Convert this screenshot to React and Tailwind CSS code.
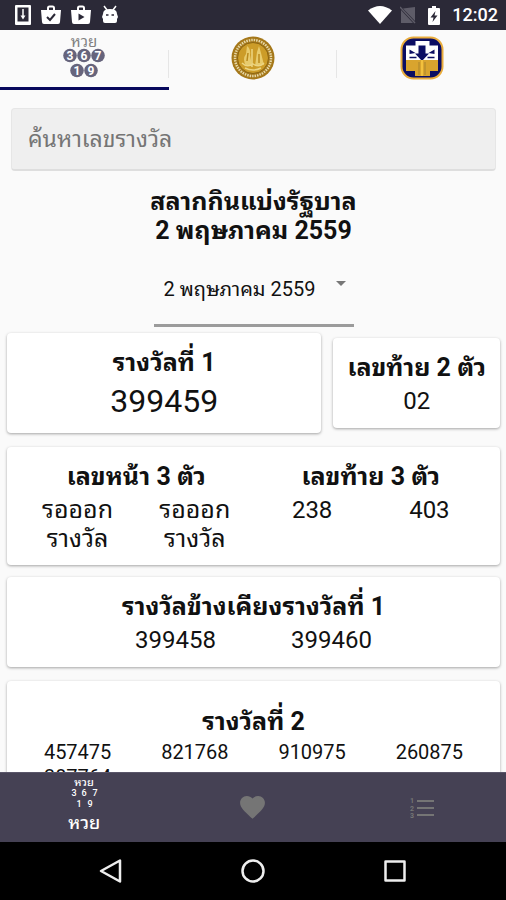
import React, { useState } from "react";

const frontThree = ["รอออกรางวัล", "รอออกรางวัล"];
const lastThree = ["238", "403"];
const nearFirst = ["399458", "399460"];
const secondPrize = ["457475", "821768", "910975", "260875", "387764"];

const StatusBar = () => (
  <header className="flex h-[30px] shrink-0 items-center justify-between bg-[#2b2937] pr-2 pl-[15px] text-white">
    <div className="flex items-center gap-2.5">
      <svg viewBox="0 0 16 20" className="h-5 w-4" aria-hidden="true">
        <rect x="0" y="0" width="16" height="20" rx="1" fill="#fff" />
        <rect x="2.500" y="2.500" width="11" height="14" fill="#2b2937" />
        <path d="M8 4v7" stroke="#fff" strokeWidth="1.500" />
        <path d="M5.500 10.500h5l-2.500 4z" fill="#fff" />
      </svg>
      <svg viewBox="0 0 20 20" className="size-5" aria-hidden="true">
        <path d="M7 5V3q0-1.500 1.500-1.500h3Q13 1.500 13 3v2" fill="none" stroke="#fff" strokeWidth="2" />
        <path d="M0 5h20l-1 12q0 2-2 2H3q-2 0-2-2z" fill="#fff" />
        <path d="M6 12l3 3 5-6" fill="none" stroke="#2b2937" strokeWidth="2" />
      </svg>
      <svg viewBox="0 0 20 20" className="size-5" aria-hidden="true">
        <path d="M7 5V3q0-1.500 1.500-1.500h3Q13 1.500 13 3v2" fill="none" stroke="#fff" strokeWidth="2" />
        <path d="M0 5h20l-1 12q0 2-2 2H3q-2 0-2-2z" fill="#fff" />
        <path d="M7.500 8.500v7l6-3.500z" fill="#2b2937" />
      </svg>
      <svg viewBox="0 0 18 20" className="h-5 w-[18px]" aria-hidden="true">
        <path d="M3 1l3 4M15 1l-3 4" stroke="#fff" strokeWidth="1.500" />
        <path d="M2 9q0-5 7-5t7 5l1 3-1 2v2q0 2-2 2H4q-2 0-2-2v-2l-1-2z" fill="#fff" />
        <path d="M5 10h2.500M10.500 10H13" stroke="#2b2937" strokeWidth="1.500" />
      </svg>
    </div>
    <div className="flex items-center gap-2">
      <svg viewBox="0 0 24 18" className="h-[18px] w-6" aria-hidden="true">
        <path d="M0 4.500Q12-4.500 24 4.500L12 18z" fill="#fff" />
      </svg>
      <svg viewBox="0 0 16 18" className="h-[18px] w-4" aria-hidden="true">
        <path d="M3 2.500L15 1v14zM1 4l12 13H1z" fill="#5e5c68" />
        <path d="M0 1l15 16" stroke="#5e5c68" strokeWidth="1.500" />
      </svg>
      <svg viewBox="0 0 12 19" className="mx-1 h-[19px] w-3" aria-hidden="true">
        <path d="M4 0h4v2h3q1 0 1 1v15q0 1-1 1H1q-1 0-1-1V3q0-1 1-1h3z" fill="#fff" />
        <path d="M7.500 5L2.500 11.500H5.500L4.500 16 9.500 9.500H6.500z" fill="#2b2937" />
      </svg>
      <span className="text-lg leading-none font-medium">12:02</span>
    </div>
  </header>
);

const LotteryBalls = () => (
  <svg viewBox="0 0 44 44" className="size-11 overflow-visible" role="img" aria-label="หวย">
    <text x="22" y="11" textAnchor="middle" fontSize="15" fill="#808080">หวย</text>
    {[["3", 8, 19.5], ["6", 22, 19.5], ["7", 36, 19.5], ["1", 15, 34.5], ["9", 29, 34.5]].map(([n, x, y]) => (
      <g key={n}>
        <circle cx={x} cy={y} r="6.800" fill="#66647c" />
        <text x={x} y={y + 4} textAnchor="middle" fontSize="12" fontWeight="700" fill="#fff">{n}</text>
      </g>
    ))}
  </svg>
);

const GoldSeal = () => (
  <svg viewBox="0 0 44 44" className="size-11" role="img" aria-label="ธ.ก.ส.">
    <circle cx="22" cy="22" r="21.500" fill="#a5781a" />
    <circle cx="22" cy="22" r="18" fill="none" stroke="#e6d8a8" strokeWidth="2.500" strokeDasharray="1.500 1" />
    <circle cx="22" cy="22" r="15.500" fill="#cc9c28" stroke="#8b6412" />
    <path d="M15 30q-4-7 0-12l1-8q4 3 3 9l2 11zM24 30l2-14 2-6 2 7 3 12z" fill="#e8cb6c" />
    <path d="M11 27q5 5 11 1 6 4 11-1M14 32q8 4 16 0M21 13v18" fill="none" stroke="#ecd583" strokeWidth="1.500" />
    <path d="M17 17l-1 8M28 18v9" stroke="#b98a1d" strokeWidth="1.500" />
  </svg>
);

const BankLogo = () => (
  <svg viewBox="0 0 44 44" className="size-11" role="img" aria-label="ธนาคาร">
    <rect x="1.500" y="1.500" width="41" height="41" rx="12" fill="#0b0d63" stroke="#e9ac3c" strokeWidth="2" />
    <path d="M6 9.500h9.500V5h14v4.500H38V24H6z" fill="#fff" />
    <path d="M18.500 9.500h7v8h3.500L22 25l-7-7.500h3.500z" fill="#0b0d63" />
    <path d="M9.500 13.500l6 3.500-6 1zM34.500 13.500l-6 3.500 6 1z" fill="#0b0d63" />
    <path d="M9.500 21.500h7M34.500 21.500h-7" stroke="#0b0d63" strokeWidth="1.500" />
    <path d="M6 24h32v11h-8v5H15v-5H6z" fill="#d9a42e" />
    <path d="M22 24v16" stroke="#f3c13d" strokeWidth="2" />
    <path d="M19 26v13M25 26v13" stroke="#a8832d" strokeWidth="1" />
  </svg>
);

const Card = ({ className = "", children }) => (
  <section className={`rounded bg-white text-center shadow-[0_1px_3px_rgba(0,0,0,0.35)] ${className}`}>
    {children}
  </section>
);

const CardTitle = ({ children }) => (
  <h2 className="text-[25px] leading-8 font-bold">{children}</h2>
);

const App = () => {
  const [tab, setTab] = useState(0);
  const [search, setSearch] = useState("");

  const tabs = [<LotteryBalls />, <GoldSeal />, <BankLogo />];

  return (
    <div className="flex h-screen flex-col overflow-hidden bg-[#fafafa] font-[Roboto,'Noto_Sans_Thai_Looped','Droid_Sans_Thai',Loma,Waree,Garuda,'Noto_Sans_Thai',sans-serif] text-[#111]">
      <StatusBar />

      <nav className="grid h-[60px] shrink-0 grid-cols-3">
        {tabs.map((icon, i) => (
          <button
            key={i}
            onClick={() => setTab(i)}
            className={`relative flex items-start justify-center border-b-[3px] pt-1.5 ${tab === i ? "border-[#07085c]" : "border-transparent"}`}
          >
            {icon}
            {i < 2 && <span className="absolute top-5 right-0 h-7 w-px bg-[#e6e6e6]" />}
          </button>
        ))}
      </nav>

      <main className="flex-1 overflow-hidden px-1.5 pl-[7px]">
        <input
          type="text"
          aria-label="ค้นหาเลขรางวัล"
          placeholder="ค้นหาเลขรางวัล"
          value={search}
          onChange={(e) => setSearch(e.target.value)}
          className="mx-1 mt-[18px] block h-[63px] w-[calc(100%-8px)] rounded border border-[#e6e6e6] border-b-2 border-b-[#dedede] bg-[#efefef] px-4 text-[23px] outline-none placeholder:text-[#757575]"
        />

        <h1 className="mt-4 text-center text-[25px] leading-[29px] font-bold">
          สลากกินแบ่งรัฐบาล
          <br />2 พฤษภาคม 2559
        </h1>

        <div className="relative mx-auto mt-3 w-[200px] border-b-[3px] border-[#9b9b9b] pb-1">
          <select
            aria-label="งวดวันที่"
            className="block h-[63px] w-full appearance-none bg-transparent px-2.5 text-xl outline-none"
          >
            <option>2 พฤษภาคม 2559</option>
          </select>
          <svg viewBox="0 0 10 5" className="pointer-events-none absolute top-6 right-2 h-[5px] w-2.5" aria-hidden="true">
            <path d="M0 0h10L5 5z" fill="#777" />
          </svg>
        </div>

        <div className="mt-1.5 flex items-center gap-3">
          <Card className="h-[100px] flex-[315] pt-3.5">
            <CardTitle>รางวัลที่ 1</CardTitle>
            <p className="text-[32px] leading-11">399459</p>
          </Card>
          <Card className="h-[90px] flex-[167] pt-3.5">
            <CardTitle>เลขท้าย 2 ตัว</CardTitle>
            <p className="text-2xl leading-[34px]">02</p>
          </Card>
        </div>

        <Card className="mt-3.5 grid h-[118px] grid-cols-2 px-3 pt-3.5">
          <div>
            <CardTitle>เลขหน้า 3 ตัว</CardTitle>
            <div className="grid grid-cols-2 pt-0.5 text-[25px] leading-[29px]">
              {frontThree.map((n, i) => (
                <p key={i} className="px-4">{n}</p>
              ))}
            </div>
          </div>
          <div>
            <CardTitle>เลขท้าย 3 ตัว</CardTitle>
            <div className="grid grid-cols-2 text-2xl leading-[34px]">
              {lastThree.map((n) => (
                <p key={n}>{n}</p>
              ))}
            </div>
          </div>
        </Card>

        <Card className="mt-3 h-[90px] pt-3.5">
          <CardTitle>รางวัลข้างเคียงรางวัลที่ 1</CardTitle>
          <div className="mx-auto grid w-[312px] grid-cols-2 text-2xl leading-[34px]">
            {nearFirst.map((n) => (
              <p key={n}>{n}</p>
            ))}
          </div>
        </Card>

        <Card className="mt-3.5 px-3 pt-[25px] pb-3">
          <CardTitle>รางวัลที่ 2</CardTitle>
          <div className="grid grid-cols-4 pt-0.5 text-xl leading-[25px]">
            {secondPrize.map((n) => (
              <p key={n}>{n}</p>
            ))}
          </div>
        </Card>
      </main>

      <nav className="grid h-[70px] shrink-0 grid-cols-3 border-t border-[#5a566a] bg-[#454154] text-white">
        <button className="flex flex-col items-center pt-1">
          <svg viewBox="0 0 32 34" className="h-[34px] w-8 overflow-visible" aria-hidden="true" fill="#fff" fontWeight="500">
            <text x="16" y="9" textAnchor="middle" fontSize="11">หวย</text>
            <text x="6" y="19" textAnchor="middle" fontSize="9">3</text>
            <text x="16" y="19" textAnchor="middle" fontSize="9">6</text>
            <text x="27" y="19" textAnchor="middle" fontSize="9">7</text>
            <text x="11" y="30" textAnchor="middle" fontSize="9">1</text>
            <text x="22" y="30" textAnchor="middle" fontSize="9">9</text>
          </svg>
          <span className="text-lg leading-6 font-medium">หวย</span>
        </button>
        <button aria-label="รายการโปรด" className="flex items-center justify-center">
          <svg viewBox="2 3 20 18.500" className="h-[23px] w-[25px]" aria-hidden="true">
            <path
              d="M12 21.350l-1.450-1.320C5.400 15.360 2 12.280 2 8.500 2 5.420 4.420 3 7.500 3c1.740 0 3.410.810 4.500 2.090C13.090 3.810 14.760 3 16.500 3 19.580 3 22 5.420 22 8.500c0 3.780-3.400 6.860-8.550 11.540L12 21.350z"
              fill="#757575"
            />
          </svg>
        </button>
        <button aria-label="รายการ" className="flex items-center justify-center">
          <svg viewBox="0 0 24 22" className="h-[22px] w-6" aria-hidden="true">
            <path d="M7 4h17M7 11h17M7 18h17" stroke="#757575" strokeWidth="2" />
            <g fill="#757575" fontSize="7" fontWeight="700">
              <text x="0" y="6">1</text>
              <text x="0" y="14">2</text>
              <text x="0" y="21">3</text>
            </g>
          </svg>
        </button>
      </nav>

      <footer className="flex h-[58px] shrink-0 items-center justify-around bg-black px-10">
        <button aria-label="Back">
          <svg viewBox="0 0 24 24" className="size-6" fill="none" stroke="#eee" strokeWidth="2.500" strokeLinejoin="round">
            <path d="M21 1.500v21L2 12z" />
          </svg>
        </button>
        <button aria-label="Home">
          <svg viewBox="0 0 24 24" className="size-6" fill="none" stroke="#eee" strokeWidth="2.500">
            <circle cx="12" cy="12" r="10.500" />
          </svg>
        </button>
        <button aria-label="Recent apps">
          <svg viewBox="0 0 24 24" className="size-6" fill="none" stroke="#eee" strokeWidth="2.500" strokeLinejoin="round">
            <rect x="2.500" y="2.500" width="19" height="19" />
          </svg>
        </button>
      </footer>
    </div>
  );
};

export default App;
